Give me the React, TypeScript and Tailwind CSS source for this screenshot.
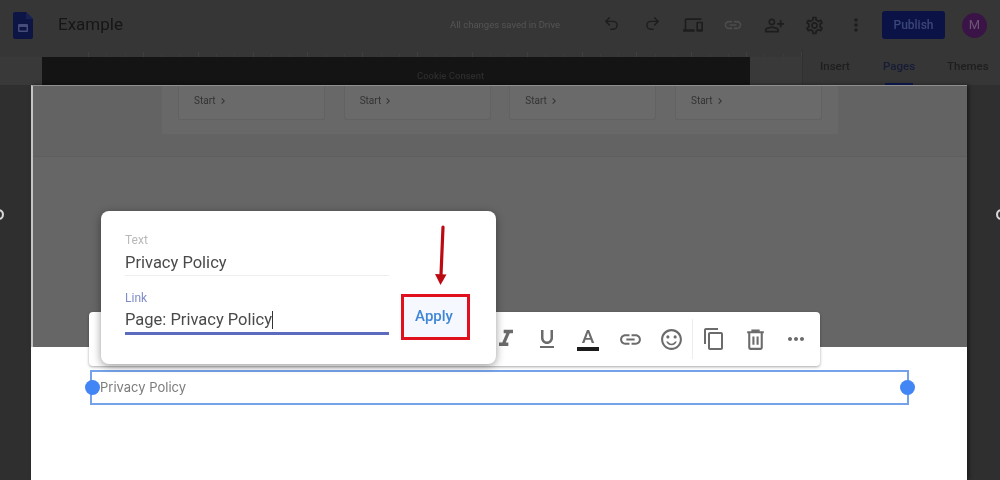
import React from 'react'
import { Undo2, Redo2 } from 'lucide-react'
import {
  MdOutlineDevices,
  MdLink,
  MdOutlinePersonAddAlt,
  MdOutlineSettings,
  MdMoreVert,
  MdFormatItalic,
  MdFormatUnderlined,
  MdOutlineSentimentSatisfiedAlt,
  MdContentCopy,
  MdMoreHoriz,
  MdChevronRight,
} from 'react-icons/md'

const roboto = { fontFamily: 'Roboto, sans-serif' }
const rulerTicks = Array.from({ length: 40 })

function TrashIcon() {
  return (
    <svg viewBox="0 0 24 24" className="mr-[16px] h-[25px] w-[25px]" fill="none" stroke="currentColor" strokeWidth="2">
      <path d="M4 5h16M9 5V3.500h6V5M6 5v15a1 1 0 0 0 1 1h10a1 1 0 0 0 1-1V5" />
      <path d="M10 9v8M14 9v8" />
    </svg>
  )
}

function HeaderBar() {
  return (
    <header className="flex h-[50px] items-center bg-[#363636]">
      <svg viewBox="0 0 20 27" className="ml-[13px] h-[27px] w-[20px]">
        <path d="M2 0h11l7 7v18a2 2 0 0 1-2 2H2a2 2 0 0 1-2-2V2a2 2 0 0 1 2-2z" fill="#0d1545" />
        <path d="M13 0l7 7h-7z" fill="#182155" />
        <rect x="5" y="12" width="10" height="8" rx="1" fill="#454d78" />
        <rect x="6.500" y="15" width="7" height="3.500" fill="#0d1545" />
      </svg>
      <span className="ml-[25px] w-[62px] text-[17px] text-[#161616]" style={roboto}>Example</span>
      <span className="ml-[330px] w-[113px] whitespace-nowrap text-[9.5px] text-[#555555]" style={roboto}>All changes saved in Drive</span>
      <div className="ml-[28px] grid w-[285px] grid-cols-7 justify-items-center text-[#1d1d1d]">
        <Undo2 size={17} />
        <Redo2 size={17} />
        <MdOutlineDevices size={20} />
        <MdLink size={20} className="text-[#4c4c4c]" />
        <MdOutlinePersonAddAlt size={21} />
        <MdOutlineSettings size={21} />
        <MdMoreVert size={20} />
      </div>
      <button className="ml-[6px] h-[28px] w-[63px] rounded-[3px] bg-[#0b1245] text-[12px] font-medium text-[#3c4678]" style={roboto}>Publish</button>
      <div className="ml-[17px] flex h-[25px] w-[25px] items-center justify-center rounded-full bg-[#3a1446] text-[13px] text-[#6f5278]" style={roboto}>M</div>
    </header>
  )
}

function SecondRow() {
  return (
    <div className="flex h-[35px]">
      <div className="flex w-[803px] flex-col border-r border-[#303030]">
        <div className="flex h-[7px] items-end justify-between bg-[#363636] pl-[88px]">
          {rulerTicks.map((_, i) => (
            <span key={i} className={i % 3 === 0 ? 'h-[5px] w-px bg-[#404040]' : 'h-[3px] w-px bg-[#3c3c3c]'} />
          ))}
        </div>
        <div className="flex flex-1 bg-[#393939]">
          <div className="ml-[42px] w-[708px] bg-[#141414] pl-[375px] pt-[14px] text-[9.5px] font-medium leading-[10px] text-[#2c2c2c]" style={roboto}>
            Cookie Consent
          </div>
        </div>
      </div>
      <div className="flex flex-1 bg-[#363636] pl-[17px] text-[11.5px] font-medium text-[#1e1e1e]" style={roboto}>
        <span className="mt-[8px] w-[63px]">Insert</span>
        <div className="relative w-[64px]">
          <span className="mt-[8px] block text-[#161c36]">Pages</span>
          <span className="absolute bottom-0 left-[2px] h-[2px] w-[28px] bg-[#0d1545]" />
        </div>
        <span className="mt-[8px]">Themes</span>
      </div>
    </div>
  )
}

function StartCard() {
  return (
    <div className="flex h-[34px] w-[147px] items-center rounded-b-[3px] border border-t-0 border-[#626262] bg-[#6a6a6a] pb-[4px] pl-[15px] text-[10px] text-[#333333]" style={roboto}>
      Start
      <MdChevronRight size={12} className="ml-[1px]" />
    </div>
  )
}

function Canvas() {
  return (
    <main className="ml-[31px] flex h-[395px] w-[936px] flex-col shadow-[2px_0_4px_rgba(0,0,0,0.45)]">
      <div className="flex h-[262px] flex-col border-l-2 border-t border-l-[#c4c4c4] border-t-[#8f8f8f] bg-[#666666]">
        <div className="h-[71px] border-b border-[#5f5f5f] bg-[#636363]">
          <div className="ml-[129px] flex h-[48px] w-[676px] justify-between bg-[#686868] px-[16px]">
            <StartCard />
            <StartCard />
            <StartCard />
            <StartCard />
          </div>
        </div>
      </div>
      <div className="flex-1 bg-white pt-[23px]">
        <div className="relative ml-[59px] flex h-[35px] w-[819px] items-center border-2 border-[#75a2ea] pl-[8px] text-[13px] text-[#7b7b7b]" style={{ fontFamily: 'Inter, sans-serif' }}>
          Privacy Policy
          <span className="absolute left-[-7px] top-[8px] h-[15px] w-[15px] rounded-full bg-[#4285f4]" />
          <span className="absolute right-[-8px] top-[8px] h-[15px] w-[15px] rounded-full bg-[#4285f4]" />
        </div>
      </div>
    </main>
  )
}

function FloatingToolbar() {
  return (
    <div className="absolute left-[89px] top-[312px] flex h-[54px] w-[731px] items-center justify-end rounded-[4px] bg-white pr-[12px] text-[#6b6b6b] shadow-[0_1px_3px_rgba(0,0,0,0.35)]">
      <MdFormatItalic size={28} className="mr-[15px]" />
      <MdFormatUnderlined size={24} className="mr-[18px]" />
      <div className="mr-[19px] flex w-[22px] flex-col items-center">
        <span className="text-[19px] font-medium leading-[20px]" style={roboto}>A</span>
        <span className="h-[4px] w-[22px] bg-[#1c1c1c]" />
      </div>
      <MdLink size={25} className="mr-[16px]" />
      <MdOutlineSentimentSatisfiedAlt size={25} className="mr-[8px]" />
      <span className="mr-[9px] h-[40px] w-px bg-[#ededed]" />
      <MdContentCopy size={24} className="mr-[17px]" />
      <TrashIcon />
      <MdMoreHoriz size={24} />
    </div>
  )
}

function LinkPopup() {
  return (
    <div className="absolute left-[101px] top-[211px] flex h-[153px] w-[395px] rounded-[8px] bg-white pl-[24px] pt-[22px] shadow-[0_2px_8px_rgba(0,0,0,0.4)]" style={roboto}>
      <div className="w-[264px]">
        <div className="text-[12px] leading-[14px] text-[#b9b9b9]">Text</div>
        <div className="mt-[4px] h-[25px] border-b border-[#eeeeee] text-[16.5px] leading-[24px] text-[#4a4a4a]">Privacy Policy</div>
        <div className="mt-[15px] text-[12px] leading-[14px] text-[#7f8cc9]">Link</div>
        <div className="mt-[3px] flex h-[27px] border-b-[3px] border-[#5c6bc0] text-[16.5px] leading-[24px] text-[#4a4a4a]">
          Page: Privacy Policy
          <span className="mt-[3px] h-[18px] w-px bg-[#333333]" />
        </div>
      </div>
      <button className="ml-[12px] mt-[61px] h-[46px] w-[69px] border-[3px] border-[#e0101c] bg-[#f5f8fe] pb-[2px] pr-[3px] text-[15px] font-medium text-[#3f87d6]">Apply</button>
    </div>
  )
}

export default function App() {
  return (
    <div className="relative flex h-[480px] w-[1000px] flex-col overflow-hidden bg-[#2f2f2f] blur-[0.6px]">
      <HeaderBar />
      <SecondRow />
      <Canvas />
      <span className="absolute left-[-7px] top-[209px] h-[11px] w-[11px] rounded-full border-2 border-[#d8d8d8]" />
      <span className="absolute right-[-7px] top-[209px] h-[11px] w-[11px] rounded-full border-2 border-[#d8d8d8]" />
      <FloatingToolbar />
      <LinkPopup />
      {/* annotation arrow */}
      <svg viewBox="0 0 30 64" className="absolute left-[427px] top-[225px] h-[64px] w-[30px]">
        <path d="M16 2 L14 50" stroke="#bb0a12" strokeWidth="3.2" strokeLinecap="round" />
        <path d="M8 49 L19.500 49.500 L13.500 60 Z" fill="#bb0a12" />
      </svg>
    </div>
  )
}
